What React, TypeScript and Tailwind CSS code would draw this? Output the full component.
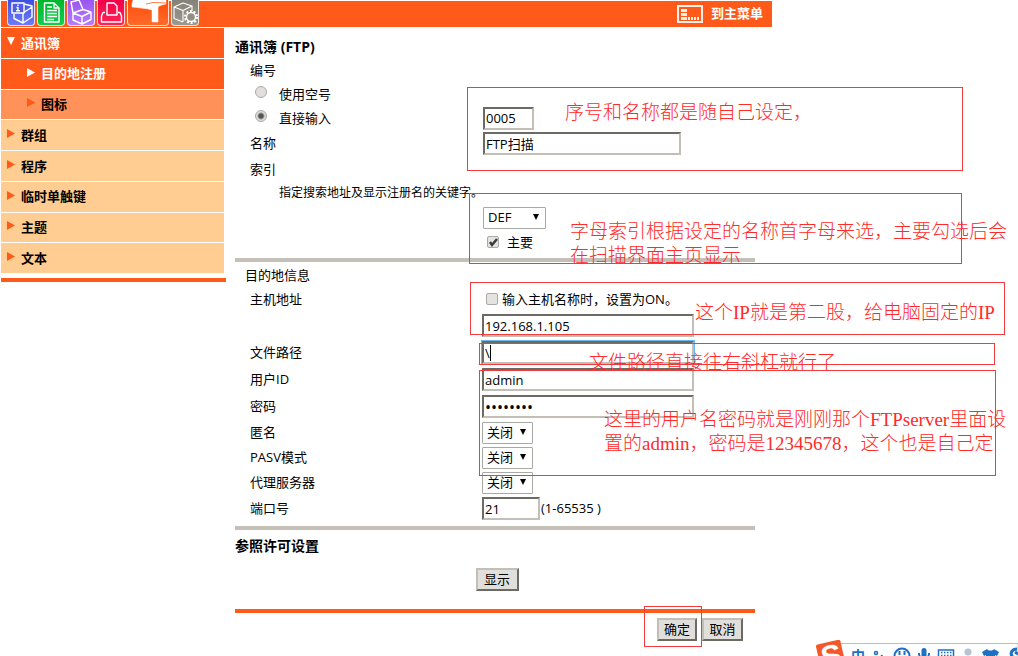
import type { ReactNode } from "react";

const cjk = "font-['Open_Sans','Noto_Sans_CJK_SC',sans-serif]";

const navItems = [
  { label: "通讯簿", level: 0, tone: "active", open: true },
  { label: "目的地注册", level: 1, tone: "active", open: false },
  { label: "图标", level: 1, tone: "sub", open: false },
  { label: "群组", level: 0, tone: "plain", open: false },
  { label: "程序", level: 0, tone: "plain", open: false },
  { label: "临时单触键", level: 0, tone: "plain", open: false },
  { label: "主题", level: 0, tone: "plain", open: false },
  { label: "文本", level: 0, tone: "plain", open: false },
];

const tones: Record<string, string> = {
  active: "bg-[#ff5a19] text-white",
  sub: "bg-[#ff9159] text-black",
  plain: "bg-[#ffcc91] text-black",
};

const field =
  "h-[23px] border-2 border-t-[#6b6b64] border-l-[#6b6b64] border-r-[#c3bfb7] border-b-[#c3bfb7] bg-white px-px text-black outline-none";

const push =
  "h-[23px] border-2 border-t-[#c3bfb7] border-l-[#c3bfb7] border-r-[#6b6b64] border-b-[#6b6b64] bg-[#e0dfdb] text-[13px] leading-none text-black";

function HeaderIcon({ title, className, width = 28, children }: { title: string; className: string; width?: number; children: ReactNode }) {
  return (
    <a href="#" aria-label={title} className={`block h-[26px] rounded-b-sm border border-t-0 border-white/80 ${className}`}>
      <svg width={width - 2} height="25" viewBox={`1 0 ${width - 2} 25`} fill="none" stroke="white" strokeWidth="1.4" strokeLinejoin="round">
        {children}
      </svg>
    </a>
  );
}

function Header() {
  return (
    <header className="mt-px ml-px flex h-[26px] max-w-[771px] items-center justify-between bg-[#ff5a19] pr-[9px] pl-1.5">
      <nav className="-mt-0.5 flex gap-0.5">
        <HeaderIcon title="device" className="bg-linear-to-b from-[#3f4fe0] to-[#6f7cf6]">
          <path d="M7 14v4.500l9 4.500 9-6V6l-8-2M16 23V13l9-6M16 13l-4-1" />
          <path d="M5 3h12v10H5z" fill="#4e5de8" />
          <path d="M9.500 7.500H11v3M9 10.800h4M11 4.500v1.500" />
        </HeaderIcon>
        <HeaderIcon title="job" className="bg-linear-to-b from-[#00b52e] to-[#10cf4e]">
          <path d="M7.500 3H17l5 5v14H7.500zM17 3v5h5" />
          <path d="M10 7h5M10 10.500h10M10 13.500h10M10 16.500h10M10 19.500h7" />
        </HeaderIcon>
        <HeaderIcon title="box" className="bg-linear-to-b from-[#9a55f0] to-[#b67cfa]">
          <path d="M6 13l9 3.500 9-4.500v7.500L15 24l-9-4zM15 16.500V24M6 13L4 2l8-2 4 9.500zM16 9.500l8 2.500" />
        </HeaderIcon>
        <HeaderIcon title="print" className="bg-linear-to-b from-[#f00048] to-[#ff2058]">
          <path d="M10 15V3h7l3 3v9zM8 12.500H6L4.500 16v6h20v-6L23 12.500h-2" />
        </HeaderIcon>
        <HeaderIcon title="address" width={42} className="bg-linear-to-b from-[#ff4a00] to-[#ff6a2a]">
          <path d="M5 4l1-4h33v4c-4 1-6 1-8 3v15h-6V10C19 8 12 8 5 7z" fill="white" strokeWidth="0.500" />
          <path d="M19 4l7-1.500L39 3" stroke="#ff5a19" strokeWidth="0.800" />
        </HeaderIcon>
        <HeaderIcon title="custom" className="bg-linear-to-b from-[#858278] to-[#9b988f]">
          <path d="M12 22l-9-3.500V7l9-4 9 3v6M3 7l9 3.500L21 6M12 10.500V22" strokeWidth="1.100" />
          <circle cx="20" cy="17" r="6" fill="#928f85" strokeDasharray="2 1.770" strokeWidth="2" />
          <circle cx="20" cy="17" r="4.500" />
        </HeaderIcon>
      </nav>
      <a href="#" className="flex items-center gap-2 text-[13px] font-bold text-white">
        <svg width="26" height="18" viewBox="0 0 26 18" fill="none">
          <path d="M1 1h24v16H1z" stroke="#fff0e8" strokeWidth="2" />
          <path d="M4 4h6v3H4zM4 8h6v3H4zM4 12h6v3H4zM11 12h2v3h-2zM14 12h2v3h-2zM17 12h2v3h-2zM20 12h2v3h-2z" fill="#fff0e8" />
        </svg>
        到主菜单
      </a>
    </header>
  );
}

function Sidebar() {
  return (
    <aside className="w-[225px] shrink-0">
      <ul className="mr-0.5 grid h-[245px] auto-rows-fr gap-px">
        {navItems.map((item) => (
          <li key={item.label} className={tones[item.tone]}>
            <a href="#" className={`flex h-full items-center gap-1.5 pt-px text-[13px] font-bold ${item.level ? "pl-[26px]" : "pl-1.5"}`}>
              <svg width="8" height="9" className={`mb-1 ${item.tone === "active" ? "fill-white" : "fill-[#ff5a19]"}`}>
                <path d={item.open ? "M0 0h8L4 8z" : "M0 0l8 4.500L0 9z"} />
              </svg>
              {item.label}
            </a>
          </li>
        ))}
      </ul>
      <div className="mt-[5px] h-1 bg-[#ff5a19]" />
    </aside>
  );
}

function Row({ label, id, height = "h-6", children }: { label?: string; id?: string; height?: string; children?: ReactNode }) {
  return (
    <div className={`flex items-center pl-[15px] ${height}`}>
      {id ? (
        <label htmlFor={id} className="w-[232px] shrink-0">{label}</label>
      ) : (
        <span className="w-[232px] shrink-0">{label}</span>
      )}
      {children}
    </div>
  );
}

function Select({ id, label, value, width = "w-[51px]" }: { id: string; label?: string; value: string; width?: string }) {
  return (
    <span className={`relative ${width}`}>
      <select id={id} aria-label={label} defaultValue={value} className="block h-[22px] w-full appearance-none rounded-[1px] border border-[#a9a9a4] bg-white pl-1 text-[13px] leading-none text-black">
        <option>{value}</option>
      </select>
      <svg width="6" height="6" className="pointer-events-none absolute top-[7px] right-[7px]">
        <path d="M0 0h6L3 6z" />
      </svg>
    </span>
  );
}

function Check({ id, checked = false }: { id: string; checked?: boolean }) {
  return (
    <span className="relative mb-0.5 size-3">
      <input id={id} type="checkbox" defaultChecked={checked} className="peer block size-3 appearance-none rounded-xs border border-[#aaa9a5] bg-[#e4e3df]" />
      <svg width="12" height="12" fill="none" className="pointer-events-none absolute top-0 left-0 hidden peer-checked:block">
        <path d="M3 6l2 3 5-6" stroke="#3c3c3c" strokeWidth="2.500" />
      </svg>
    </span>
  );
}

const radio =
  "mb-1 size-3 appearance-none rounded-full border border-[#aaa9a5] bg-[#e0dfdb] checked:bg-[radial-gradient(circle,#555_2px,#e0dfdb_4px)]";

function AddressForm() {
  return (
    <form className="w-full max-w-[520px] text-[13px] leading-none text-black">
      <h1 className="flex h-6 items-center text-sm leading-none font-bold">通讯簿 (FTP)</h1>
      <Row label="编号" height="h-[23px]" />
      <div className="flex h-6 items-center gap-3 pl-5">
        <input id="auto" type="radio" name="number" className={radio} />
        <label htmlFor="auto">使用空号</label>
      </div>
      <div className="flex h-6 items-center gap-3 pl-5">
        <input id="direct" type="radio" name="number" defaultChecked className={radio} />
        <label htmlFor="direct" className="w-48">直接输入</label>
        <input aria-label="编号" defaultValue="0005" className={`${field} w-[51px]`} />
      </div>
      <Row label="名称" id="name" height="h-[27px]">
        <input id="name" defaultValue="FTP扫描" className={`${field} ml-px w-[198px]`} />
      </Row>
      <Row label="索引" />
      <p className="flex h-6 items-center pl-11 text-xs">指定搜索地址及显示注册名的关键字。</p>
      <Row height="h-[25px]">
        <span className="ml-px flex">
          <Select id="index" label="索引" value="DEF" width="w-[63px]" />
        </span>
      </Row>
      <div className="flex h-[25px] items-center gap-2 pl-[252px]">
        <Check id="main" checked />
        <label htmlFor="main">主要</label>
      </div>
      <hr className="mt-[3px] mb-px h-1 border-0 bg-[#c4c0b8]" />

      <h2 className="flex h-6 items-center pl-2.5">目的地信息</h2>
      <Row label="主机地址" height="h-[25px]">
        <span className="flex items-center gap-1 pl-1">
          <Check id="hostname" />
          <label htmlFor="hostname">输入主机名称时，设置为ON。</label>
        </span>
      </Row>
      <Row height="h-[27px]">
        <input aria-label="主机地址" defaultValue="192.168.1.105" className={`${field} w-[212px]`} />
      </Row>
      <Row label="文件路径" id="path" height="h-[27px]">
        <span className="relative flex">
          <input id="path" defaultValue="\" className={`${field} w-[212px] shadow-[0_0_0_1px_#6db5ee]`} />
          <span className="absolute top-1 left-2 h-4 w-px bg-black" />
        </span>
      </Row>
      <Row label="用户ID" id="user" height="h-[27px]">
        <input id="user" defaultValue="admin" className={`${field} w-[212px]`} />
      </Row>
      <Row label="密码" id="password" height="h-[27px]">
        <input id="password" type="password" defaultValue="12345678" className={`${field} w-[212px] text-base`} />
      </Row>
      <Row label="匿名" id="anonymous" height="h-[25px]">
        <Select id="anonymous" value="关闭" />
      </Row>
      <Row label="PASV模式" id="pasv" height="h-[25px]">
        <Select id="pasv" value="关闭" />
      </Row>
      <Row label="代理服务器" id="proxy" height="h-[25px]">
        <Select id="proxy" value="关闭" />
      </Row>
      <Row label="端口号" id="port" height="h-[27px]">
        <input id="port" defaultValue="21" className={`${field} mr-px w-[58px]`} />
        (1-65535 )
      </Row>
      <hr className="mt-1 h-1 border-0 bg-[#c4c0b8]" />

      <h2 className="mt-1 flex h-6 items-center text-sm leading-none font-bold">参照许可设置</h2>
      <div className="mt-2.5 flex justify-center pl-1">
        <button type="button" className={`${push} w-[43px]`}>显示</button>
      </div>
      <hr className="mt-[18px] h-1 border-0 bg-[#ff5a19]" />
      <div className="mt-[5px] flex justify-end gap-[5px] pr-3">
        <button type="submit" className={`${push} w-10`}>确定</button>
        <button type="button" className={`${push} w-[41px]`}>取消</button>
      </div>
    </form>
  );
}

// red marker frames and notes lying over the form
function Notes() {
  const frame = "absolute border border-[#f43b3b]";
  const note = "absolute whitespace-nowrap";
  return (
    <div className="pointer-events-none absolute inset-0 overflow-hidden font-['Liberation_Serif','Noto_Sans_CJK_SC',serif] text-[19px] leading-6 font-light text-[#ff2a2a]">
      <div className={`${frame} top-[87px] left-[467px] h-[84px] w-[496px]`} />
      <p className={`${note} top-[101px] left-[565px]`}>序号和名称都是随自己设定，</p>
      <div className={`${frame} top-[193px] left-[469px] h-[71px] w-[493px]`} />
      <p className={`${note} top-[220px] left-[570px]`}>
        字母索引根据设定的名称首字母来选，主要勾选后会
        <br />
        在扫描界面主页显示
      </p>
      <div className={`${frame} top-[282px] left-[470px] h-[53px] w-[535px]`} />
      <p className={`${note} top-[301px] left-[695px]`}>这个IP就是第二股，给电脑固定的IP</p>
      <div className={`${frame} top-[343px] left-[479px] h-[22px] w-[516px]`} />
      <p className={`${note} top-[351px] left-[589px]`}>文件路径直接往右斜杠就行了</p>
      <div className={`${frame} top-[370px] left-[479px] h-[106px] w-[517px]`} />
      <p className={`${note} top-[408px] left-[604px]`}>
        这里的用户名密码就是刚刚那个FTPserver里面设
        <br />
        置的admin，密码是12345678，这个也是自己定
      </p>
      <div className={`${frame} top-[606px] left-[644px] h-[41px] w-[58px]`} />
    </div>
  );
}

function ImeBar() {
  return (
    <div className="absolute right-0 bottom-0 h-4 w-[202px] overflow-hidden">
      <svg width="202" height="34" viewBox="0 0 202 34" fill="none" stroke="#1f6fc2" strokeWidth="2">
        <path d="M20 3.500H202V34H20z" fill="#fdfeff" stroke="#b4c0cc" strokeWidth="1" />
        <g transform="rotate(-13 14 14)">
          <rect x="2" y="2" width="25" height="26" rx="2" fill="#f4572b" stroke="none" />
          <text x="15" y="27" textAnchor="middle" fill="white" stroke="none" className="font-['Liberation_Sans',sans-serif] text-[31px] font-bold">S</text>
        </g>
        <text x="35" y="21" fill="#1f6fc2" stroke="none" className="font-['Noto_Sans_CJK_SC',sans-serif] text-[14px] font-bold">中</text>
        <circle cx="60" cy="13" r="1.500" strokeWidth="1.500" />
        <path d="M66 15l-1 4" />
        <circle cx="86" cy="16" r="7.500" />
        <path d="M83.500 11v4M88.500 11v4" />
        <rect x="105.500" y="8" width="5" height="10" rx="2.500" fill="#1f6fc2" stroke="none" />
        <path d="M103 13c0 8 10 8 10 0" />
        <path d="M122.500 10h15v12h-15z" strokeWidth="1.500" />
        <path d="M125 12.500h11M125 15.500h11" strokeDasharray="1.500 1.500" strokeWidth="1.500" />
        <circle cx="152" cy="12" r="3.500" fill="#b9c1d3" stroke="none" />
        <path d="M146 24c0-9 12-9 12 0z" fill="#b9c1d3" stroke="none" />
        <path d="M171 9l-5 3 2 4 2-1v8h9v-8l2 1 2-4-5-3c-1 2-6 2-7 0z" fill="#1f6fc2" stroke="none" />
        <path d="M201 9c-5 0-7 4-5 7l-4 5M202 14l-3-2" strokeWidth="3" />
      </svg>
    </div>
  );
}

export default function App() {
  return (
    <div className={`relative flex min-h-screen flex-col overflow-hidden bg-white ${cjk}`}>
      <Header />
      <div className="mt-px ml-px flex gap-[9px]">
        <Sidebar />
        <main className="min-w-0 flex-1 pt-[7px]">
          <AddressForm />
        </main>
      </div>
      <Notes />
      <ImeBar />
    </div>
  );
}
